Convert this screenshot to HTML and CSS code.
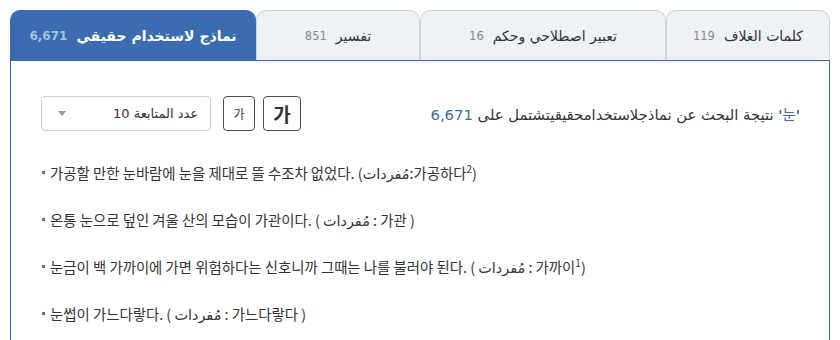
FILE: index.html
```html
<!DOCTYPE html>
<html lang="ar" dir="rtl">
<head>
<meta charset="utf-8">
<title>눈</title>
<link rel="stylesheet" href="styles.css">
</head>
<body>
<div class="wrap">
  <div class="tabs">
    <div class="tab tab-narrow"><span class="tab-label">كلمات الغلاف</span> <span class="tab-count">119</span></div>
    <div class="tab tab-wide"><span class="tab-label">تعبير اصطلاحي وحكم</span> <span class="tab-count">16</span></div>
    <div class="tab tab-narrow"><span class="tab-label">تفسير</span> <span class="tab-count">851</span></div>
    <div class="tab tab-wide tab-active"><span class="tab-label">نماذج لاستخدام حقيقي</span> <span class="tab-count">6,671</span></div>
  </div>
  <div class="panel">
    <div class="toolbar">
      <div class="result">'<span class="accent">눈</span>' نتيجة البحث عن نماذجلاستخدامحقيقيتشتمل على <span class="accent">6,671</span></div>
      <div class="controls">
        <button class="size-btn size-large" type="button">가</button>
        <button class="size-btn size-small" type="button">가</button>
        <div class="select"><span class="select-text">عدد المتابعة 10</span><span class="caret"></span></div>
      </div>
    </div>
    <ul class="examples" dir="ltr">
      <li>가공할 만한 눈바람에 눈을 제대로 뜰 수조차 없었다. (مُفردات:가공하다<sup>2</sup>)</li>
      <li>온통 눈으로 덮인 겨울 산의 모습이 가관이다. ( مُفردات : 가관 )</li>
      <li>눈금이 백 가까이에 가면 위험하다는 신호니까 그때는 나를 불러야 된다. ( مُفردات : 가까이<sup>1</sup>)</li>
      <li>눈썹이 가느다랗다. ( مُفردات : 가느다랗다 )</li>
    </ul>
  </div>
</div>
</body>
</html>
```
FILE: styles.css
```css
* { box-sizing: border-box; }
html, body { margin: 0; padding: 0; background: #fff; }
body {
  font-family: "DejaVu Sans", "Noto Sans CJK KR", sans-serif;
  color: #333;
}
.wrap {
  margin: 10px;
  width: 820px;
}
.tabs {
  display: flex;
  height: 50px;
}
.tab {
  height: 50px;
  display: flex;
  align-items: center;
  justify-content: center;
  gap: 9px;
  background: #eef1f5;
  border: 1px solid #d0d4da;
  border-bottom: none;
  border-radius: 10px 10px 0 0;
  font-size: 14px;
  color: #333;
}
.tab-narrow { width: 20%; }
.tab-wide { width: 30%; }
.tab-count {
  font-size: 11.5px;
  color: #8a8a8a;
}
.tab-active {
  background: #3b6cb2;
  border-color: #3b6cb2;
  color: #fff;
  font-weight: bold;
}
.tab-active .tab-count {
  color: #a9bedd;
  font-size: 12px;
}
.panel {
  border: 1px solid #3b6cb2;
  padding: 35px 29px 40px 30px;
}
.toolbar {
  display: flex;
  justify-content: space-between;
  align-items: center;
  height: 35px;
}
.result {
  font-size: 14.8px;
  color: #333;
}
.accent { color: #3b6cb2; }
.controls {
  display: flex;
  align-items: center;
  direction: rtl;
}
.size-btn {
  height: 35px;
  border: 1px solid #4b505c;
  border-radius: 4px;
  background: #fff;
  color: #333;
  font-family: "Noto Sans CJK KR", sans-serif;
  padding: 0;
  line-height: 1;
}
.size-large {
  width: 38px;
  font-size: 19px;
  font-weight: bold;
  margin-left: 8px;
}
.size-small {
  width: 32px;
  font-size: 12px;
  margin-left: 12px;
}
.select {
  width: 170px;
  height: 35px;
  border: 1px solid #cfcfcf;
  border-radius: 4px;
  display: flex;
  align-items: center;
  justify-content: space-between;
  padding: 0 12px 0 16px;
  font-size: 13px;
  color: #333;
}
.caret {
  width: 0;
  height: 0;
  border-left: 4.5px solid transparent;
  border-right: 4.5px solid transparent;
  border-top: 5px solid #999;
}
.examples {
  list-style: none;
  margin: 19px 0 0 0;
  padding: 0;
  text-align: left;
  font-family: "Noto Sans CJK KR", "DejaVu Sans", sans-serif;
  font-size: 14.4px;
  color: #333;
}
.examples li {
  position: relative;
  line-height: 20px;
  padding: 13px 0 14px 9px;
}
.examples li::before {
  content: "";
  position: absolute;
  left: 1px;
  top: 21px;
  width: 3px;
  height: 3px;
  background: #5b6f98;
}
.examples sup {
  font-size: 10px;
  line-height: 0;
}
```
